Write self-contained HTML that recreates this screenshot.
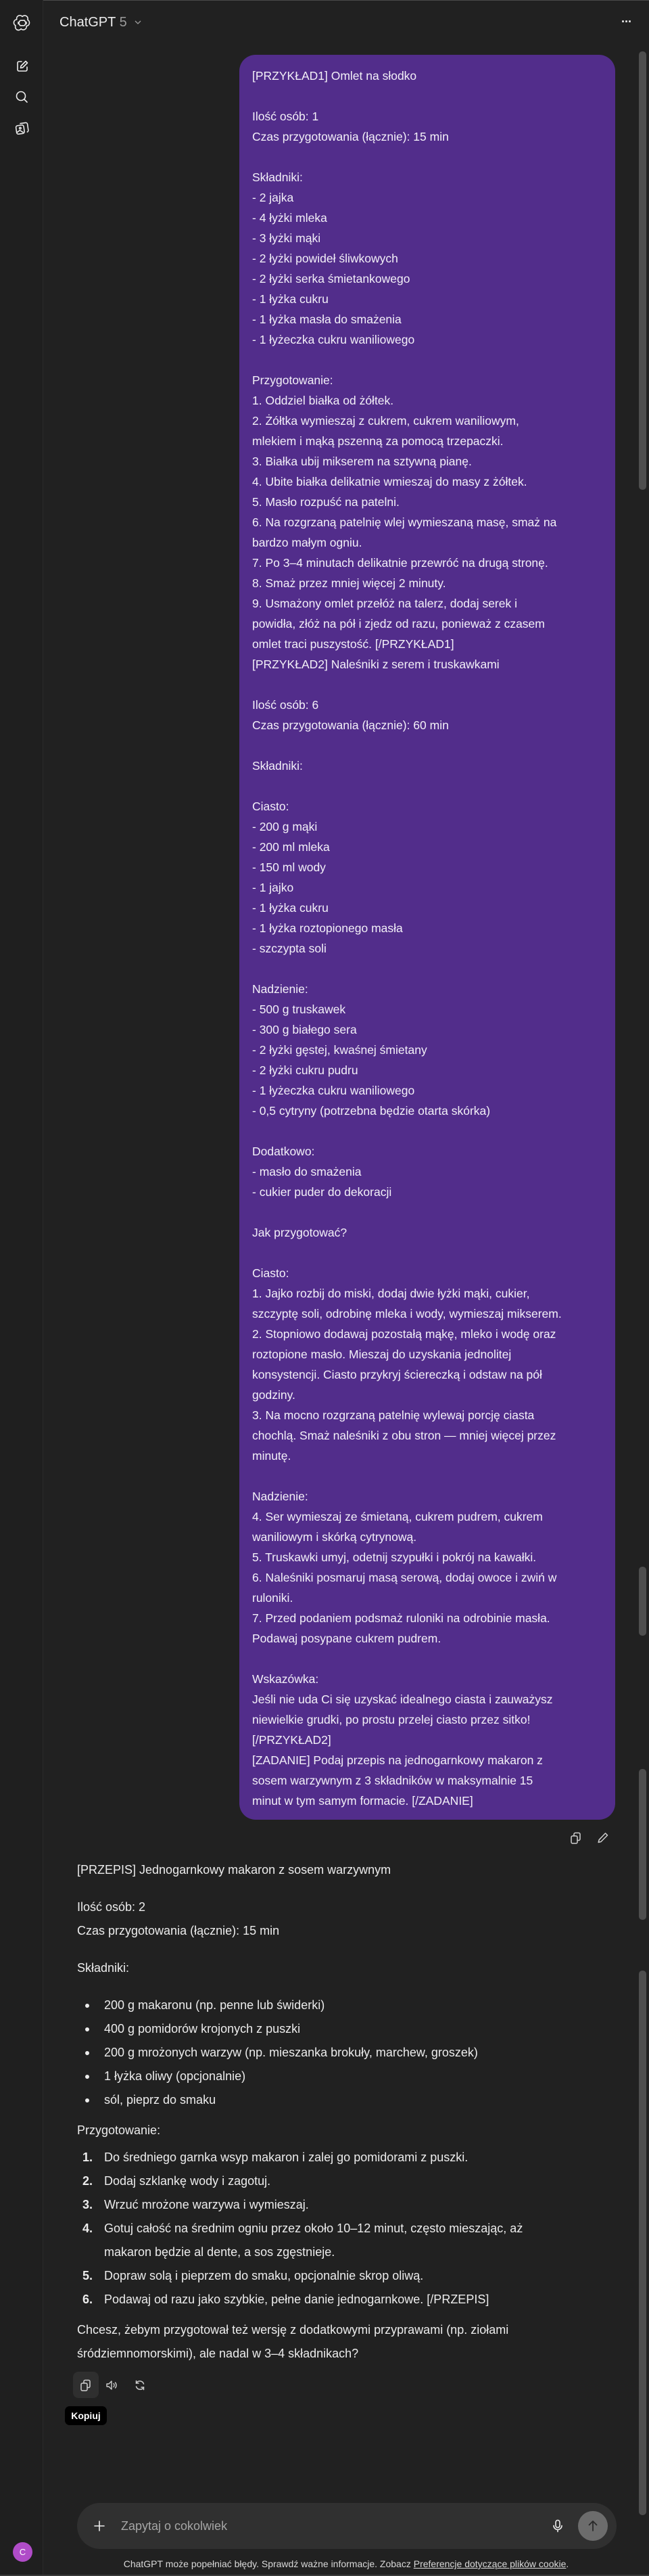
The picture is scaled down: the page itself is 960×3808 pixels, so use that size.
<!DOCTYPE html>
<html><head><meta charset="utf-8">
<style>
*{margin:0;padding:0;box-sizing:border-box}
html,body{width:960px;height:3808px;background:#212121;overflow:hidden}
body{position:relative;font-family:"Liberation Sans",sans-serif;color:#ececec}
.abs{position:absolute}
#side{left:0;top:0;width:64px;height:3808px;border-right:1px solid #2b2b2b;background:#1f1f1f}
.topline{left:0;top:0;width:960px;height:1px;background:#4a4a4a}
.botline{left:0;top:3806px;width:960px;height:2px;background:#3a3a3a}
#title{left:88px;top:20px;font-size:20px;line-height:26px;color:#ececec}
#title span{color:#9b9b9b}
#bubble{left:354px;top:81px;width:556px;height:2609px;background:#522d8b;border-radius:24px;padding:16px 20px 0 19px;font-size:17.5px;line-height:30px;color:#f3f0f8;white-space:pre}
.sb{left:945px;width:11px;background:#4e4e4e;border-radius:5px}
.a{left:114px;font-size:18px;line-height:35px;color:#ececec;white-space:nowrap}
.bul{left:126px;width:6px;height:6px;border-radius:50%;background:#ececec}
.num{left:122px;font-weight:bold;font-size:18px;line-height:35px;white-space:nowrap}
.li{left:154px;font-size:18px;line-height:35px;white-space:nowrap}
svg{position:absolute;overflow:visible}
</style></head><body>
<div class="abs topline"></div>
<div id="side" class="abs"></div>
<!-- logo -->
<svg style="left:20px;top:21px" width="26" height="26" viewBox="0 0 24 24" fill="none" stroke="#ececec" stroke-width="1.5" stroke-linejoin="round"><path d="M12 3.2a4.4 4.4 0 0 1 7.3 4.6a4.4 4.4 0 0 1-1.6 8.3a4.4 4.4 0 0 1-7.4 3.9a4.4 4.4 0 0 1-7.5-4.5a4.4 4.4 0 0 1 1.6-8.3A4.4 4.4 0 0 1 12 3.2z"/><path d="M9 8.5l6 0 3 5.2M15 15.5l-6 0-3-5.2M9 8.5l-3 5.2M15 15.5l3-5.2"/></svg>
<!-- edit -->
<svg style="left:23px;top:88px" width="20" height="20" viewBox="0 0 20 20" fill="none" stroke="#ececec" stroke-width="1.6" stroke-linecap="round" stroke-linejoin="round"><path d="M9 3H5a2 2 0 0 0-2 2v10a2 2 0 0 0 2 2h10a2 2 0 0 0 2-2v-4"/><path d="M15 2.5l2.5 2.5-7 7-3 .5.5-3z"/></svg>
<!-- search -->
<svg style="left:22px;top:133px" width="20" height="20" viewBox="0 0 20 20" fill="none" stroke="#ececec" stroke-width="1.6" stroke-linecap="round"><circle cx="9" cy="9" r="6.5"/><path d="M14 14l4 4"/></svg>
<!-- library -->
<svg style="left:22px;top:179px" width="21" height="21" viewBox="0 0 20 20" fill="none" stroke="#ececec" stroke-width="1.5" stroke-linejoin="round"><rect x="2" y="6" width="11" height="12" rx="2.5" transform="rotate(-8 7 12)"/><path d="M7 3.5l8-1.2a2.4 2.4 0 0 1 2.7 2l1.2 8.5a2.4 2.4 0 0 1-2 2.7"/><circle cx="7.5" cy="10" r="1.2"/><path d="M3 16l4-3 5 3"/></svg>
<div id="title" class="abs">ChatGPT <span>5</span></div>
<svg style="left:199px;top:30px" width="10" height="7" viewBox="0 0 10 7" fill="none" stroke="#9b9b9b" stroke-width="1.3"><path d="M1 1l4 4 4-4"/></svg>
<div class="abs" style="left:919px;top:22px;font-size:18px;color:#ececec;letter-spacing:-1px;font-weight:bold">···</div>

<!-- scrollbar -->
<div class="abs sb" style="top:76px;height:648px"></div>
<div class="abs sb" style="top:2316px;height:102px"></div>
<div class="abs sb" style="top:2615px;height:223px"></div>
<div class="abs sb" style="top:2913px;height:805px"></div>

<div id="bubble" class="abs">[PRZYKŁAD1] Omlet na słodko

Ilość osób: 1
Czas przygotowania (łącznie): 15 min

Składniki:
- 2 jajka
- 4 łyżki mleka
- 3 łyżki mąki
- 2 łyżki powideł śliwkowych
- 2 łyżki serka śmietankowego
- 1 łyżka cukru
- 1 łyżka masła do smażenia
- 1 łyżeczka cukru waniliowego

Przygotowanie:
1. Oddziel białka od żółtek.
2. Żółtka wymieszaj z cukrem, cukrem waniliowym,
mlekiem i mąką pszenną za pomocą trzepaczki.
3. Białka ubij mikserem na sztywną pianę.
4. Ubite białka delikatnie wmieszaj do masy z żółtek.
5. Masło rozpuść na patelni.
6. Na rozgrzaną patelnię wlej wymieszaną masę, smaż na
bardzo małym ogniu.
7. Po 3–4 minutach delikatnie przewróć na drugą stronę.
8. Smaż przez mniej więcej 2 minuty.
9. Usmażony omlet przełóż na talerz, dodaj serek i
powidła, złóż na pół i zjedz od razu, ponieważ z czasem
omlet traci puszystość. [/PRZYKŁAD1]
[PRZYKŁAD2] Naleśniki z serem i truskawkami

Ilość osób: 6
Czas przygotowania (łącznie): 60 min

Składniki:

Ciasto:
- 200 g mąki
- 200 ml mleka
- 150 ml wody
- 1 jajko
- 1 łyżka cukru
- 1 łyżka roztopionego masła
- szczypta soli

Nadzienie:
- 500 g truskawek
- 300 g białego sera
- 2 łyżki gęstej, kwaśnej śmietany
- 2 łyżki cukru pudru
- 1 łyżeczka cukru waniliowego
- 0,5 cytryny (potrzebna będzie otarta skórka)

Dodatkowo:
- masło do smażenia
- cukier puder do dekoracji

Jak przygotować?

Ciasto:
1. Jajko rozbij do miski, dodaj dwie łyżki mąki, cukier,
szczyptę soli, odrobinę mleka i wody, wymieszaj mikserem.
2. Stopniowo dodawaj pozostałą mąkę, mleko i wodę oraz
roztopione masło. Mieszaj do uzyskania jednolitej
konsystencji. Ciasto przykryj ściereczką i odstaw na pół
godziny.
3. Na mocno rozgrzaną patelnię wylewaj porcję ciasta
chochlą. Smaż naleśniki z obu stron — mniej więcej przez
minutę.

Nadzienie:
4. Ser wymieszaj ze śmietaną, cukrem pudrem, cukrem
waniliowym i skórką cytrynową.
5. Truskawki umyj, odetnij szypułki i pokrój na kawałki.
6. Naleśniki posmaruj masą serową, dodaj owoce i zwiń w
ruloniki.
7. Przed podaniem podsmaż ruloniki na odrobinie masła.
Podawaj posypane cukrem pudrem.

Wskazówka:
Jeśli nie uda Ci się uzyskać idealnego ciasta i zauważysz
niewielkie grudki, po prostu przelej ciasto przez sitko!
[/PRZYKŁAD2]
[ZADANIE] Podaj przepis na jednogarnkowy makaron z
sosem warzywnym z 3 składników w maksymalnie 15
minut w tym samym formacie. [/ZADANIE]</div>

<!-- copy/edit under bubble -->
<svg style="left:843px;top:2708px" width="18" height="18" viewBox="0 0 18 18" fill="none" stroke="#cfcfcf" stroke-width="1.5" stroke-linejoin="round"><rect x="2" y="6" width="9" height="11" rx="2"/><path d="M6 6V3.5A2 2 0 0 1 8 1.5h5a2 2 0 0 1 2 2v7a2 2 0 0 1-2 2h-2"/></svg>
<svg style="left:883px;top:2708px" width="18" height="18" viewBox="0 0 18 18" fill="none" stroke="#cfcfcf" stroke-width="1.5" stroke-linejoin="round"><path d="M12.5 2l3 3-9.5 9.5-3.8 1 1-3.8z"/></svg>

<!-- assistant -->
<div class="abs a" style="top:2747px">[PRZEPIS] Jednogarnkowy makaron z sosem warzywnym</div>
<div class="abs a" style="top:2802px">Ilość osób: 2</div>
<div class="abs a" style="top:2837px">Czas przygotowania (łącznie): 15 min</div>
<div class="abs a" style="top:2892px">Składniki:</div>
<div class="abs bul" style="top:2962px"></div><div class="abs li" style="top:2947px">200 g makaronu (np. penne lub świderki)</div>
<div class="abs bul" style="top:2997px"></div><div class="abs li" style="top:2982px">400 g pomidorów krojonych z puszki</div>
<div class="abs bul" style="top:3032px"></div><div class="abs li" style="top:3017px">200 g mrożonych warzyw (np. mieszanka brokuły, marchew, groszek)</div>
<div class="abs bul" style="top:3067px"></div><div class="abs li" style="top:3052px">1 łyżka oliwy (opcjonalnie)</div>
<div class="abs bul" style="top:3102px"></div><div class="abs li" style="top:3087px">sól, pieprz do smaku</div>
<div class="abs a" style="top:3132px">Przygotowanie:</div>
<div class="abs num" style="top:3172px">1.</div><div class="abs li" style="top:3172px">Do średniego garnka wsyp makaron i zalej go pomidorami z puszki.</div>
<div class="abs num" style="top:3207px">2.</div><div class="abs li" style="top:3207px">Dodaj szklankę wody i zagotuj.</div>
<div class="abs num" style="top:3242px">3.</div><div class="abs li" style="top:3242px">Wrzuć mrożone warzywa i wymieszaj.</div>
<div class="abs num" style="top:3277px">4.</div><div class="abs li" style="top:3277px">Gotuj całość na średnim ogniu przez około 10–12 minut, często mieszając, aż</div>
<div class="abs li" style="top:3312px">makaron będzie al dente, a sos zgęstnieje.</div>
<div class="abs num" style="top:3347px">5.</div><div class="abs li" style="top:3347px">Dopraw solą i pieprzem do smaku, opcjonalnie skrop oliwą.</div>
<div class="abs num" style="top:3382px">6.</div><div class="abs li" style="top:3382px">Podawaj od razu jako szybkie, pełne danie jednogarnkowe. [/PRZEPIS]</div>
<div class="abs a" style="top:3427px">Chcesz, żebym przygotował też wersję z dodatkowymi przyprawami (np. ziołami</div>
<div class="abs a" style="top:3462px">śródziemnomorskimi), ale nadal w 3–4 składnikach?</div>

<!-- action icons -->
<div class="abs" style="left:108px;top:3506px;width:38px;height:39px;border-radius:8px;background:#2f2f2f"></div>
<svg style="left:118px;top:3517px" width="18" height="18" viewBox="0 0 18 18" fill="none" stroke="#cfcfcf" stroke-width="1.5" stroke-linejoin="round"><rect x="2" y="6" width="9" height="11" rx="2"/><path d="M6 6V3.5A2 2 0 0 1 8 1.5h5a2 2 0 0 1 2 2v7a2 2 0 0 1-2 2h-2"/></svg>
<svg style="left:156px;top:3517px" width="18" height="18" viewBox="0 0 18 18" fill="none" stroke="#cfcfcf" stroke-width="1.4" stroke-linejoin="round" stroke-linecap="round"><path d="M2 7h3l4-4v12l-4-4H2z"/><path d="M12 6.5a3.5 3.5 0 0 1 0 5M14.5 5a6 6 0 0 1 0 8"/></svg>
<svg style="left:198px;top:3517px" width="18" height="18" viewBox="0 0 18 18" fill="none" stroke="#cfcfcf" stroke-width="1.5" stroke-linecap="round"><path d="M14.5 7A6 6 0 0 0 3.5 6M3.5 11A6 6 0 0 0 14.5 12"/><path d="M3.5 2.5v3.5h3.5M14.5 15.5V12H11"/></svg>
<div class="abs" style="left:96px;top:3557px;width:62px;height:28px;border-radius:7px;background:#000;color:#fff;font-size:14px;line-height:28px;text-align:center;font-weight:bold">Kopiuj</div>

<!-- input -->
<div class="abs" style="left:114px;top:3700px;width:798px;height:68px;border-radius:34px;background:#303030"></div>
<svg style="left:138px;top:3725px" width="18" height="18" viewBox="0 0 18 18" stroke="#ececec" stroke-width="1.6" stroke-linecap="round"><path d="M9 2v14M2 9h14"/></svg>
<div class="abs" style="left:179px;top:3722px;font-size:18px;line-height:24px;color:#a5a5a5">Zapytaj o cokolwiek</div>
<svg style="left:816px;top:3724px" width="18" height="20" viewBox="0 0 18 20" fill="none" stroke="#ececec" stroke-width="1.6" stroke-linecap="round"><rect x="6" y="1.5" width="6" height="11" rx="3"/><path d="M3 9.5a6 6 0 0 0 12 0M9 15.5v3"/></svg>
<div class="abs" style="left:855px;top:3712px;width:44px;height:44px;border-radius:50%;background:#6c6c6c"></div>
<svg style="left:867px;top:3724px" width="20" height="20" viewBox="0 0 20 20" fill="none" stroke="#2a2a2a" stroke-width="1.8" stroke-linecap="round" stroke-linejoin="round"><path d="M10 17V3M4.5 8.5L10 3l5.5 5.5"/></svg>
<div class="abs" style="left:19px;top:3758px;width:29px;height:29px;border-radius:50%;background:#b04cc8;color:#fff;font-size:13px;line-height:29px;text-align:center">C</div>
<div class="abs" style="left:0;top:3781px;width:1024px;text-align:center;font-size:14px;line-height:18px;color:#d8d8d8;white-space:nowrap">ChatGPT może popełniać błędy. Sprawdź ważne informacje. Zobacz <span style="text-decoration:underline">Preferencje dotyczące plików cookie</span>.</div>
<div class="abs botline"></div>
</body></html>
